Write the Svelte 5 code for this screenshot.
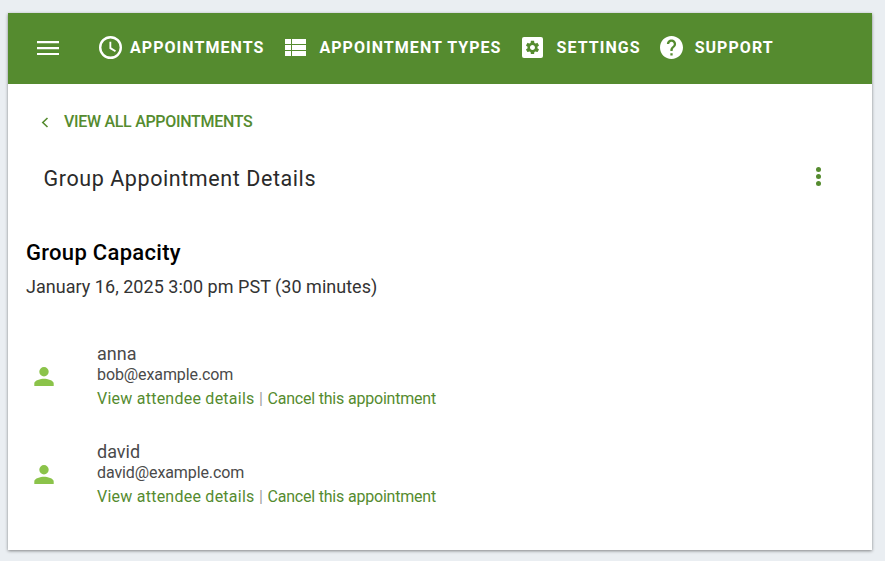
<script>
    const attendees = [
        { name: 'anna', email: 'bob@example.com' },
        { name: 'david', email: 'david@example.com' }
    ];
</script>

<div class="page">
    <div class="card">
        <nav class="topbar">
            <button class="menu" aria-label="Menu">
                <svg width="22" height="14" viewBox="0 0 22 14"><path d="M0 0h22v2.200H0zM0 6h22v2.200H0zM0 12h22v2.200H0z" fill="#fff"/></svg>
            </button>
            <a class="nav-item first" href="#a">
                <svg width="23" height="23" viewBox="0 0 24 24"><path fill="#fff" d="M12 0a12 12 0 1 0 0 24 12 12 0 0 0 0-24zm0 21.500a9.500 9.500 0 1 1 0-19 9.500 9.500 0 0 1 0 19z"/><path fill="#fff" d="M12.800 6h-1.900v7.200l5.800 3.400 1-1.600-4.900-2.900z"/></svg>
                <span>APPOINTMENTS</span>
            </a>
            <a class="nav-item" href="#b">
                <svg width="21" height="17" viewBox="0 0 21 17"><path fill="#fff" d="M0 0h6v5H0zM7 0h14v5H7zM0 6h6v5H0zM7 6h14v5H7zM0 12h6v5H0zM7 12h14v5H7z"/></svg>
                <span>APPOINTMENT TYPES</span>
            </a>
            <a class="nav-item settings" href="#c">
                <svg width="21" height="21" viewBox="0 0 21 21">
                    <rect width="21" height="21" rx="2" fill="#fff"/>
                    <path transform="translate(2.200 2.200) scale(.69)" fill="#558b2f" d="M19.140 12.940c.04-.3.06-.61.06-.94 0-.32-.02-.64-.07-.94l2.030-1.580c.18-.14.23-.41.12-.61l-1.920-3.320c-.12-.22-.37-.29-.59-.22l-2.390.96c-.5-.38-1.030-.7-1.620-.94l-.36-2.540c-.04-.24-.24-.41-.48-.41h-3.840c-.24 0-.43.17-.47.41l-.36 2.540c-.59.24-1.130.57-1.620.94l-2.390-.96c-.22-.08-.47 0-.59.22L2.740 8.870c-.12.21-.08.47.12.61l2.030 1.580c-.05.3-.09.63-.09.94s.02.64.07.94l-2.030 1.580c-.18.14-.23.41-.12.61l1.920 3.320c.12.22.37.29.59.22l2.390-.96c.5.38 1.030.7 1.620.94l.36 2.540c.05.24.24.41.48.41h3.840c.24 0 .44-.17.47-.41l.36-2.540c.59-.24 1.130-.56 1.620-.94l2.390.96c.22.08.47 0 .59-.22l1.920-3.320c.12-.22.07-.47-.12-.61l-2.010-1.580zM12 15.600c-1.980 0-3.600-1.620-3.600-3.600s1.620-3.600 3.600-3.600 3.600 1.620 3.600 3.600-1.620 3.600-3.600 3.600z"/>
                </svg>
                <span>SETTINGS</span>
            </a>
            <a class="nav-item support" href="#d">
                <svg width="23" height="23" viewBox="2 2 20 20"><path fill="#fff" d="M12 2C6.480 2 2 6.480 2 12s4.480 10 10 10 10-4.480 10-10S17.520 2 12 2zm1 17h-2v-2h2v2zm2.070-7.750l-.9.92C13.450 12.900 13 13.500 13 15h-2v-.5c0-1.100.45-2.100 1.170-2.830l1.240-1.260c.37-.36.59-.86.59-1.410 0-1.100-.9-2-2-2s-2 .9-2 2H8c0-2.210 1.790-4 4-4s4 1.790 4 4c0 .88-.36 1.680-.93 2.250z"/></svg>
                <span>SUPPORT</span>
            </a>
        </nav>

        <a class="back" href="#all">
            <svg width="8" height="11" viewBox="0 0 8 11"><path d="M6.500 1 1.800 5.500l4.700 4.500" fill="none" stroke="#558b2f" stroke-width="1.600"/></svg>
            <span>VIEW ALL APPOINTMENTS</span>
        </a>

        <div class="title-row">
            <h1>Group Appointment Details</h1>
            <div class="dots"><i></i><i></i><i></i></div>
        </div>

        <h2>Group Capacity</h2>
        <p class="when">January 16, 2025 3:00 pm PST (30 minutes)</p>

        <ul class="attendees">
            {#each attendees as person}
                <li>
                    <svg class="person" width="20" height="19" viewBox="0 0 20 19"><path fill="#8bc34a" d="M10 9.400a4.700 4.700 0 1 0 0-9.400 4.700 4.700 0 0 0 0 9.400zm0 2.300c-3.300 0-9.700 1.600-9.700 4.700V19h19.400v-2.600c0-3.100-6.400-4.700-9.700-4.700z"/></svg>
                    <div class="info">
                        <div class="name">{person.name}</div>
                        <div class="email">{person.email}</div>
                        <div class="links">
                            <a class="view" href="#view">View attendee details</a>
                            <span class="sep">|</span>
                            <a class="cancel" href="#cancel">Cancel this appointment</a>
                        </div>
                    </div>
                </li>
            {/each}
        </ul>
    </div>
</div>

<style>
    :global(body) {
        margin: 0;
        background: #eaeef2;
        font-family: Roboto, "Liberation Sans", sans-serif;
    }

    .page {
        padding: 13px 13px 11px 8px;
    }

    .card {
        height: 537px;
        background: #fff;
        box-shadow: 0 1px 3px rgba(0, 0, 0, 0.45);
    }

    .topbar {
        height: 69px;
        padding: 0 0 2px 29px;
        background: #558b2f;
        display: flex;
        align-items: center;
    }

    .menu {
        width: 22px;
        padding: 0;
        border: 0;
        background: none;
        display: flex;
    }

    .nav-item {
        display: flex;
        align-items: center;
        gap: 13px;
        margin-right: 20px;
        color: #fff;
        font-size: 16px;
        font-weight: 700;
        letter-spacing: 1.050px;
        text-decoration: none;
    }

    .nav-item.first {
        margin-left: 40px;
        margin-right: 21px;
        gap: 8px;
    }

    .nav-item.settings {
        gap: 14px;
        margin-right: 19px;
    }

    .nav-item.support {
        gap: 12px;
    }

    .back {
        display: flex;
        align-items: center;
        gap: 15px;
        margin: 28px 0 0 33px;
        color: #558b2f;
        font-size: 16px;
        font-weight: 500;
        letter-spacing: -0.3px;
        line-height: 20px;
        text-decoration: none;
    }

    .title-row {
        display: flex;
        justify-content: space-between;
        align-items: center;
        margin-top: 32px;
        padding: 0 51px 0 35.500px;
    }

    h1 {
        margin: 0;
        font-size: 21.500px;
        font-weight: 400;
        letter-spacing: 0.58px;
        line-height: 30px;
        color: #2a2a2a;
    }

    .dots {
        display: flex;
        flex-direction: column;
        gap: 2px;
        margin-bottom: 5px;
    }

    .dots i {
        width: 5px;
        height: 5px;
        border-radius: 50%;
        background: #558b2f;
    }

    h2 {
        margin: 44px 0 0 18px;
        font-size: 22px;
        font-weight: 500;
        letter-spacing: 0.3px;
        line-height: 30px;
        color: #000;
    }

    .when {
        margin: 6px 0 0 18px;
        font-size: 18px;
        letter-spacing: 0.03px;
        line-height: 26px;
        color: #333;
    }

    .attendees {
        list-style: none;
        margin: 42px 0 0;
        padding: 0;
    }

    .attendees li {
        display: flex;
        align-items: center;
        height: 70px;
        margin-bottom: 28px;
        padding-left: 26px;
    }

    .person {
        flex: none;
        margin-right: 43px;
        margin-top: -1px;
    }

    .name {
        font-size: 18px;
        line-height: 22px;
        color: #4a4a4a;
    }

    .email {
        font-size: 16px;
        line-height: 20px;
        letter-spacing: -0.1px;
        color: #4a4a4a;
    }

    .links {
        font-size: 16px;
        line-height: 24px;
        margin-top: 2px;
        display: flex;
        gap: 4.500px;
    }

    .links a {
        color: #558b2f;
        text-decoration: none;
    }

    .links .view {
        letter-spacing: 0.24px;
    }

    .links .cancel {
        letter-spacing: -0.2px;
    }

    .sep {
        color: #9e9e9e;
    }
</style>
